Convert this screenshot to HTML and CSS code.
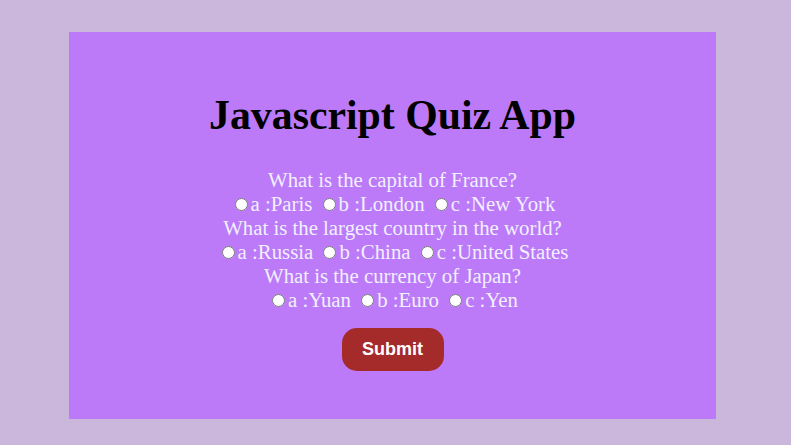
FILE: index.html
```html
<!DOCTYPE html>
<html>
<head>
<meta charset="utf-8">
<link rel="stylesheet" href="styles.css">
</head>
<body>
<div class="quiz">
  <h1 class="title">Javascript Quiz App</h1>
  <div class="questions">
    <div class="q">What is the capital of France?</div>
    <div class="opts"><label><input type="radio" name="q1">a :Paris</label> <label><input type="radio" name="q1">b :London</label> <label><input type="radio" name="q1">c :New York</label></div>
    <div class="q">What is the largest country in the world?</div>
    <div class="opts"><label><input type="radio" name="q2">a :Russia</label> <label><input type="radio" name="q2">b :China</label> <label><input type="radio" name="q2">c :United States</label></div>
    <div class="q">What is the currency of Japan?</div>
    <div class="opts"><label><input type="radio" name="q3">a :Yuan</label> <label><input type="radio" name="q3">b :Euro</label> <label><input type="radio" name="q3">c :Yen</label></div>
  </div>
  <button class="submit">Submit</button>
</div>
</body>
</html>
```
FILE: styles.css
```css
html, body {
  margin: 0;
  padding: 0;
}
body {
  background: #cbb6dc;
  font-family: "Liberation Serif", "Times New Roman", serif;
}
.quiz {
  width: 647px;
  height: 387px;
  margin: 32px 0 0 69px;
  background: #bc7af9;
  display: flex;
  flex-direction: column;
  align-items: center;
  box-sizing: border-box;
  padding-top: 59px;
}
.title {
  margin: 0;
  font-size: 41.8px;
  font-weight: bold;
  color: #000;
  line-height: 48px;
}
.questions {
  margin-top: 29px;
  color: #f0f0ff;
  font-size: 20.8px;
  line-height: 24px;
  text-align: center;
}
.opts label {
  white-space: nowrap;
}
.opts input {
  margin: 3px 3px 0 5px;
  width: 13px;
  height: 13px;
  vertical-align: baseline;
}
.submit {
  margin-top: 16px;
  width: 102px;
  height: 43px;
  border: none;
  border-radius: 15px;
  background: #a52a2a;
  color: #fff;
  font-family: "Liberation Sans", Arial, sans-serif;
  font-weight: bold;
  font-size: 18px;
}
```
